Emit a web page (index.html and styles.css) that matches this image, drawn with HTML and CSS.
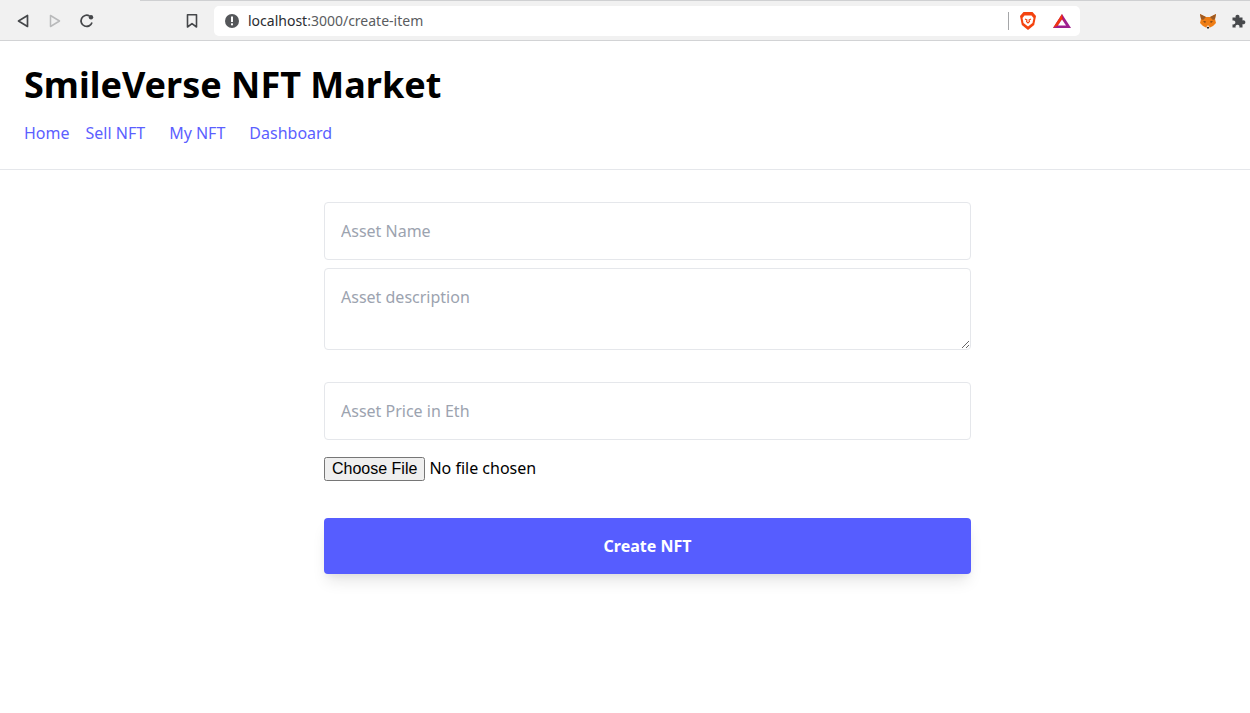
FILE: index.html
```html
<!DOCTYPE html>
<html lang="en">
<head>
<meta charset="utf-8">
<title>SmileVerse NFT Market</title>
<link rel="stylesheet" href="styles.css">
</head>
<body>
<div class="toolbar">
  <div class="tabstrip"></div>
  <div class="toolbar-row">
    <div class="nav-buttons">
      <svg class="ico" width="16" height="16" viewBox="0 0 16 16"><path d="M12.5 2.5v11L3.5 8z" fill="none" stroke="#45474a" stroke-width="1.7" stroke-linejoin="round"/></svg>
      <svg class="ico" width="16" height="16" viewBox="0 0 16 16"><path d="M3.5 2.5v11l9-5.500z" fill="none" stroke="#b9babb" stroke-width="1.500" stroke-linejoin="round"/></svg>
      <svg class="ico" width="16" height="16" viewBox="0 0 16 16"><path d="M13 9.500A5.600 5.600 0 1 1 10.500 3" fill="none" stroke="#45474a" stroke-width="1.700"/><circle cx="12" cy="4.300" r="2.200" fill="#45474a"/></svg>
    </div>
    <svg class="bookmark" width="14" height="16" viewBox="0 0 14 16"><path d="M2.500 1.800h9v12.200L7 10.600 2.500 14z" fill="none" stroke="#45474a" stroke-width="1.600" stroke-linejoin="round"/></svg>
    <div class="omnibox">
      <svg class="info" width="16" height="16" viewBox="0 0 16 16"><circle cx="8" cy="8" r="7" fill="#55575a"/><rect x="7" y="3.500" width="2" height="5.500" fill="#fff"/><rect x="7" y="10.300" width="2" height="2" fill="#fff"/></svg>
      <span class="url"><span class="host">localhost</span>:3000/create-item</span>
      <span class="divider"></span>
      <svg class="brave" width="18" height="20" viewBox="0 0 18 20"><path d="M4.500 1h9L17 5l-1.800 9L9 19 2.800 14 1 5z" fill="#f4430f"/><path d="M5.500 4.500h7L14.500 7l-1 5L9 15.500 4.500 12l-1-5z" fill="#fff"/><path d="M6 8l2 1-.5 1.500L9 12l1.500-1.500L10 9l2-1" fill="none" stroke="#f4430f" stroke-width="1.100"/></svg>
      <svg class="bat" width="20" height="16" viewBox="0 0 20 16"><path d="M10 1L1 15h18z" fill="#9e1f8f"/><path d="M10 1L1 15l5-2.500L10 6z" fill="#f2360f"/><path d="M10 1v5l2 3.500z" fill="#e0182d"/><path d="M10 6.500L6 12.600h8z" fill="#fff"/></svg>
    </div>
    <div class="extensions">
      <svg class="fox" width="18" height="16" viewBox="0 0 18 16"><path d="M1 1l6 3h4l6-3-1 5 1 4-3 3-3 1.500H7L4 13l-3-3 1-4z" fill="#ef7d14"/><path d="M1 1l6 3-3 3-2-1z M17 1l-6 3 3 3 2-1z" fill="#9c5a24"/><path d="M7 14.500h4L9 12z" fill="#e8d3c0"/><path d="M8 14h2v1.500H8z" fill="#2b2622"/><path d="M4 8l3 .5L6 10z M14 8l-3 .5 1 1.500z" fill="#6b3d16"/></svg>
      <svg class="puzzle" width="16" height="16" viewBox="0 0 16 16"><path d="M1.500 4.500h3.200a2 2 0 1 1 3.600 0h3.200v3a2 2 0 1 1 0 3.600v3.400H8.300a2 2 0 1 0-3.600 0H1.500v-3.300a2 2 0 1 0 0-3.600z" fill="#47494c"/></svg>
    </div>
  </div>
</div>
<div class="app">
  <nav class="site-nav">
    <h1 class="site-title">SmileVerse NFT Market</h1>
    <div class="site-links">
      <a class="link link-home" href="#">Home</a>
      <a class="link" href="#">Sell NFT</a>
      <a class="link" href="#">My NFT</a>
      <a class="link" href="#">Dashboard</a>
    </div>
  </nav>
  <main class="create">
    <form class="create-form">
      <input class="field field-name" type="text" placeholder="Asset Name">
      <textarea class="field field-desc" placeholder="Asset description"></textarea>
      <input class="field field-price" type="text" placeholder="Asset Price in Eth">
      <input class="file" type="file">
      <button class="submit" type="button">Create NFT</button>
    </form>
  </main>
</div>
</body>
</html>
```
FILE: styles.css
```css
* { box-sizing: border-box; }
html, body { margin: 0; padding: 0; height: 100%; overflow: hidden; background: #fff; }
body { font-family: "Noto Sans", "Liberation Sans", sans-serif; color: #000; }

.toolbar { height: 41px; background: #f1f1f1; border-bottom: 1px solid #d2d3d5; }
.tabstrip { height: 1px; margin-left: 140px; background: #cfd0d2; }
.toolbar-row { display: flex; align-items: center; height: 39px; }
.nav-buttons { display: flex; gap: 16px; margin-left: 15px; width: 80px; }
.ico { display: block; }
.bookmark { margin-left: 90px; }
.omnibox {
  display: flex; align-items: center; width: 866px; height: 30px; margin-left: 15px;
  background: #fff; border-radius: 5px;
}
.info { margin-left: 10px; }
.url { margin-left: 8px; font-size: 14px; color: #5a5c60; width: 760px; white-space: nowrap; }
.host { color: #2a2c30; }
.divider { width: 1px; height: 18px; background: #a5a6a8; margin-left: 0; }
.brave { margin-left: 10px; }
.bat { margin-left: 15px; }
.extensions { display: flex; align-items: center; gap: 14px; margin-left: 119px; }
.fox, .puzzle { display: block; }

.site-nav { height: 129px; padding: 24px 24px 0; border-bottom: 1px solid #e5e7eb; }
.site-title { margin: 0; font-size: 36px; line-height: 40px; font-weight: 700; }
.site-links { display: flex; margin-top: 16px; font-size: 16px; line-height: 24px; }
.link { margin-right: 24px; color: #5c5fff; text-decoration: none; }
.link-home { margin-right: 16px; }

.create { padding: 32px 0 0 324px; }
.create-form { display: flex; flex-direction: column; width: 647px; }
.field {
  display: block; width: 100%; padding: 16px; border: 1px solid #e5e7eb; border-radius: 4px;
  font: 16px/24px "Noto Sans", "Liberation Sans", sans-serif; color: #000; background: #fff;
}
.field::placeholder { color: #9ca3af; opacity: 1; }
.field-name { height: 58px; }
.field-desc { height: 82px; margin-top: 8px; resize: vertical; }
.field-price { height: 58px; margin-top: 32px; }
.file { display: block; height: 30px; margin-top: 16px; font: 16px/24px "Noto Sans", "Liberation Sans", sans-serif; }
.submit {
  height: 56px; margin-top: 32px; border: 0; border-radius: 4px; background: #565dff; color: #fff;
  font: 700 16px/24px "Noto Sans", "Liberation Sans", sans-serif;
  box-shadow: 0 10px 15px -3px rgba(0,0,0,.1), 0 4px 6px -2px rgba(0,0,0,.05);
}
```
